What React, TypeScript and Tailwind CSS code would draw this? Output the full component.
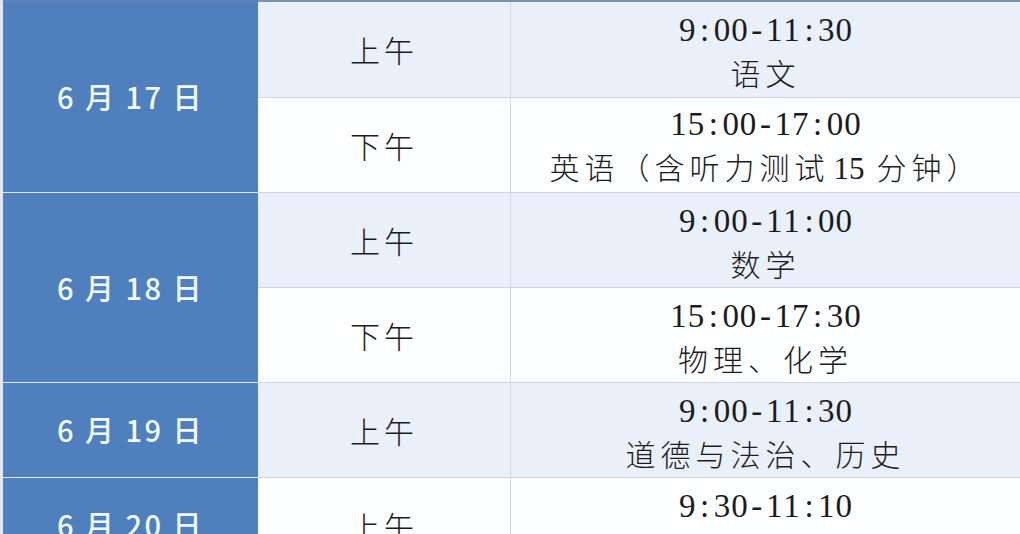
import React from "react";

const cjk = { fontFamily: '"Noto Sans CJK SC", sans-serif' };
const serif = { fontFamily: '"Liberation Serif", "Noto Sans CJK SC", serif' };

function Mono({ text }: { text: string }) {
  return (
    <span className="inline-flex" style={serif}>
      {text.split("").map((c, i) => (
        <span key={i} className="inline-block w-[17.4px] text-center">
          {c}
        </span>
      ))}
    </span>
  );
}

type Slot = { period: string; time: string; subject: React.ReactNode };
type Day = { date: string; slots: Slot[] };

const days: Day[] = [
  {
    date: "6 月 17 日",
    slots: [
      { period: "上午", time: "9:00-11:30", subject: "语文" },
      {
        period: "下午",
        time: "15:00-17:00",
        subject: (
          <>
            英语（含听力测试
            <span style={serif} className="tracking-[0px] text-[31px] ml-[4px] mr-[12px]">
              15
            </span>
            分钟）
          </>
        ),
      },
    ],
  },
  {
    date: "6 月 18 日",
    slots: [
      { period: "上午", time: "9:00-11:00", subject: "数学" },
      { period: "下午", time: "15:00-17:30", subject: "物理、化学" },
    ],
  },
  {
    date: "6 月 19 日",
    slots: [{ period: "上午", time: "9:00-11:30", subject: "道德与法治、历史" }],
  },
  {
    date: "6 月 20 日",
    slots: [{ period: "上午", time: "9:30-11:10", subject: "地理、生物学" }],
  },
];

export default function App() {
  let rowIndex = 0;
  return (
    <div className="w-[1020px] h-[534px] overflow-hidden bg-white flex">
      <div className="w-[3px] shrink-0 bg-[#e3e8ef]" />
      <div className="flex-1 flex flex-col">
        <div className="h-[2px] shrink-0 flex">
          <div className="w-[255px] bg-[#5d83b8]" />
          <div className="flex-1 bg-[#7d92a8]" />
        </div>
        {days.map((d, di) => (
          <div key={di} className="flex shrink-0">
            <div
              className={`w-[255px] shrink-0 bg-[#4f7fbc] flex items-center justify-center text-[#f0faff] text-[29px] font-medium tracking-[2.5px] ${di > 0 ? "border-t border-[#d8ecf8]" : ""}`}
              style={cjk}
            >
              {d.date}
            </div>
            <div className="flex-1 flex flex-col">
              {d.slots.map((s, si) => {
                const idx = rowIndex++;
                const light = idx % 2 === 0;
                return (
                  <div
                    key={si}
                    className={`h-[95px] flex ${idx > 0 ? "border-t border-[#cdd6e2]" : ""} ${light ? "bg-[#eaf0f9]" : "bg-[#fdfeff]"}`}
                  >
                    <div
                      className="w-[253px] shrink-0 flex items-center justify-center text-[30px] text-[#1c1c1c] font-light tracking-[4px] border-r border-[#d3dae4]"
                      style={cjk}
                    >
                      {s.period}
                    </div>
                    <div className="flex-1 flex flex-col items-center justify-center text-[#1c1c1c] pt-[4px]">
                      <div className="text-[33px] leading-[40px] whitespace-nowrap">
                        <Mono text={s.time} />
                      </div>
                      <div
                        style={cjk}
                        className="text-[30px] leading-[44px] font-light tracking-[5px] whitespace-nowrap"
                      >
                        {s.subject}
                      </div>
                    </div>
                  </div>
                );
              })}
            </div>
          </div>
        ))}
      </div>
    </div>
  );
}
